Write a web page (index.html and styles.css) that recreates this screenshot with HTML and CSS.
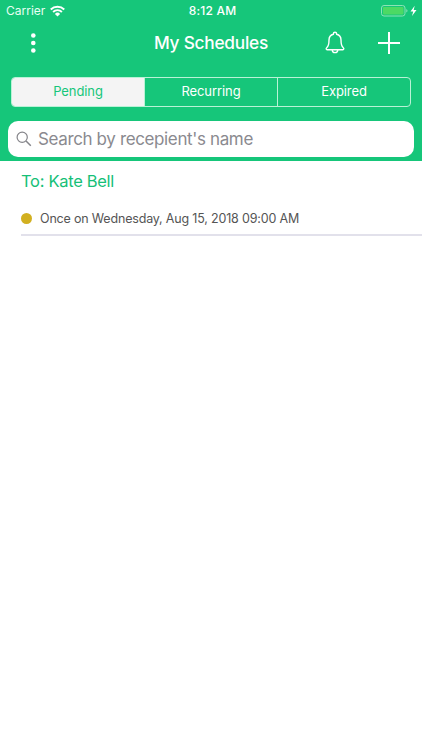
FILE: index.html
```html
<!DOCTYPE html>
<html lang="en">
<head>
<meta charset="utf-8">
<title>My Schedules</title>
<link rel="stylesheet" href="styles.css">
</head>
<body>
<header class="header">
  <div class="status">
    <div class="carrier"><span class="carrier-name">Carrier</span>
      <svg class="wifi" width="15" height="12" viewBox="0 0 14 11" fill="none" stroke="#fff" stroke-width="1.8"><path d="M.7 4.1a9 9 0 0 1 12.6 0"/><path d="M2.9 6.4a5.8 5.8 0 0 1 8.2 0"/><path d="M4.6 8.2a3.4 3.4 0 0 1 4.8 0L7 10.6z" fill="#fff" stroke="none"/></svg>
    </div>
    <time class="clock">8:12 AM</time>
    <svg class="battery" width="37" height="12" viewBox="0 0 37 12"><rect x=".5" y=".5" width="23.5" height="10.5" rx="2.5" fill="none" stroke="#8ce3b5"/><rect x="2" y="2" width="20.5" height="7.5" rx="1" fill="#4cd964"/><path d="M25.3 4v3.6q1.2-.5 1.2-1.8T25.3 4z" fill="#8ce3b5"/><path d="M33.7.8 29.5 6.5h2.7L31 10.9l4.5-6h-2.8z" fill="#fff"/></svg>
  </div>
  <nav class="navbar">
    <svg class="menu" width="6" height="20" viewBox="0 0 6 20" fill="#fff"><circle cx="3.3" cy="2.5" r="2.3"/><circle cx="3.3" cy="10" r="2.3"/><circle cx="3.3" cy="17.5" r="2.3"/></svg>
    <h1 class="title">My Schedules</h1>
    <div class="actions">
      <svg width="20" height="24" viewBox="0 0 20 24" fill="none" stroke="#fff" stroke-width="1.4" stroke-linejoin="round"><path d="M8.4 3.3V2.8a1.6 1.6 0 0 1 3.2 0v.5c3 .7 4.4 2.8 4.4 5.7 0 4.5.6 6.4 2.3 7.7.9.7.6 2-.4 2H2.1c-1 0-1.3-1.3-.4-2C3.4 15.4 4 13.5 4 9c0-2.9 1.4-5 4.4-5.7z"/><path d="M7.3 18.9a2.7 2.7 0 0 0 5.4 0"/></svg>
      <svg width="22" height="22" viewBox="0 0 22 22" stroke="#fff" stroke-width="2"><path d="M11 0v22M0 11h22"/></svg>
    </div>
  </nav>
  <div class="tabs">
    <div class="tab active"><span>Pending</span></div>
    <div class="tab"><span>Recurring</span></div>
    <div class="tab"><span>Expired</span></div>
  </div>
  <div class="search">
    <svg width="16" height="16" viewBox="0 0 16 16" fill="none" stroke="#85858a" stroke-width="1.2"><circle cx="6.2" cy="6.2" r="5.1"/><path d="m10 10 4.8 4.8" stroke-width="1.5"/></svg>
    <span class="placeholder">Search by recepient's name</span>
  </div>
</header>
<main class="list">
  <article class="item">
    <h2 class="recipient">To: Kate Bell</h2>
    <div class="schedule"><i class="dot"></i><span class="when">Once on Wednesday, Aug 15, 2018 09:00 AM</span></div>
  </article>
</main>
</body>
</html>
```
FILE: styles.css
```css
* { box-sizing: border-box; }
body { margin: 0; width: 422px; height: 750px; overflow: hidden; background: #fff; font-family: Inter, "Liberation Sans", sans-serif; }
svg { display: block; flex: none; }
h1, h2 { margin: 0; font-weight: 500; white-space: nowrap; }
.header { height: 161px; background: #16c67a; color: #fff; }
.status { height: 22px; display: grid; grid-template-columns: 1fr auto 1fr; align-items: center; padding: 0 4px 0 6px; font-size: 12px; line-height: 22px; }
.carrier { display: flex; align-items: center; gap: 5px; color: #e8fff3; }
.clock { font-weight: 500; letter-spacing: 0.2px; padding-left: 1px; }
.battery { justify-self: end; }
.navbar { height: 42px; display: grid; grid-template-columns: 1fr auto 1fr; align-items: center; padding: 0 22px; }
.menu { margin-left: 8px; }
.title { font-size: 17.3px; line-height: 24px; letter-spacing: -0.25px; }
.actions { display: flex; align-items: center; justify-content: flex-end; gap: 33px; padding-right: 0.5px; }
.tabs { margin: 12.5px 11px 0; height: 30px; border: 1px solid #b9f2d6; border-radius: 4px; display: grid; grid-template-columns: 132px 133px 1fr; overflow: hidden; }
.tab { display: flex; align-items: center; justify-content: center; font-size: 13px; letter-spacing: -0.08px; padding-bottom: 2px; }
.tab + .tab { border-left: 1px solid #b9f2d6; }
.active { background: #f4f4f4; color: #16c67a; }
.search { margin: 14px 8px 0; height: 36.5px; background: #fff; border-radius: 10px; display: flex; align-items: center; gap: 6px; padding-left: 8px; color: #8a8a8f; }
.placeholder { font-size: 17px; letter-spacing: -0.37px; white-space: nowrap; }
.item { margin-left: 21px; height: 75px; border-bottom: 2px solid #e2e1eb; }
.recipient { padding-top: 8px; font-size: 16.5px; font-weight: 400; line-height: 24px; letter-spacing: -0.3px; color: #16bf78; }
.schedule { margin-top: 15px; height: 20px; display: flex; align-items: center; gap: 8px; }
.dot { width: 11px; height: 11px; border-radius: 50%; background: #d2b020; }
.when { font-size: 12.5px; letter-spacing: -0.18px; color: #555; white-space: nowrap; }
```
